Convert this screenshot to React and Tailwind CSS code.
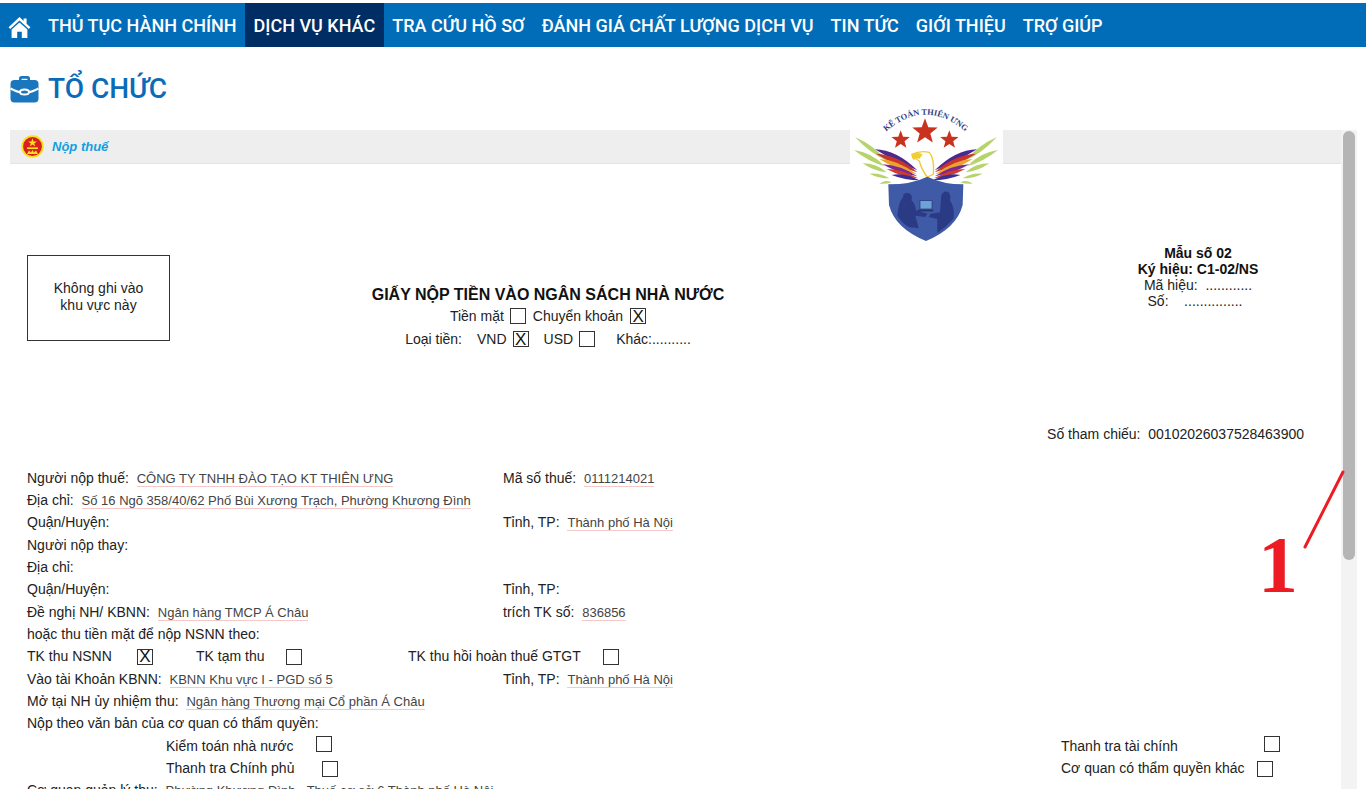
const navItems = ['THỦ TỤC HÀNH CHÍNH', 'DỊCH VỤ KHÁC', 'TRA CỨU HỒ SƠ', 'ĐÁNH GIÁ CHẤT LƯỢNG DỊCH VỤ', 'TIN TỨC', 'GIỚI THIỆU', 'TRỢ GIÚP'];

const HomeIcon = () => (
  <svg width="23" height="23" viewBox="0 0 23 23" fill="#fff">
    <path d="M11.5 1 L0.6 11.2 L2.2 13 L11.5 4.4 L20.8 13 L22.4 11.2 L18.6 7.7 V2.6 H15.6 V4.9 Z" />
    <path d="M11.5 6.4 L3.6 13.6 V22 H9.2 V15.8 H13.8 V22 H19.4 V13.6 Z" />
  </svg>
);

const CaseIcon = () => (
  <svg width="29" height="28" viewBox="0 0 29 28">
    <path d="M9 6 V3.5 Q9 1 11.5 1 H17.5 Q20 1 20 3.5 V6 H17.4 V3.8 H11.6 V6 Z" fill="#1a76bd" />
    <rect x="0.5" y="5" width="28" height="22.5" rx="4" fill="#1a76bd" />
    <path d="M0.5 13.5 Q7 17 10.5 17 M28.5 13.5 Q22 17 18.5 17" stroke="#fff" strokeWidth="2" fill="none" />
    <ellipse cx="14.5" cy="17" rx="4.5" ry="2.6" fill="none" stroke="#fff" strokeWidth="2" />
  </svg>
);

const Emblem = () => (
  <svg width="23" height="23" viewBox="0 0 23 23">
    <circle cx="11.5" cy="11.5" r="11.2" fill="#f6e020" />
    <circle cx="11.5" cy="11.5" r="9.4" fill="#d7201f" />
    <path d="M11.5 3.2 L12.6 6.4 L15.9 6.4 L13.2 8.4 L14.2 11.5 L11.5 9.6 L8.8 11.5 L9.8 8.4 L7.1 6.4 L10.4 6.4 Z" fill="#f6e020" />
    <rect x="6" y="12.4" width="11" height="1.6" fill="#f6e020" />
    <path d="M6 19 L8 15.4 L10 17.4 L11.5 15 L13 17.4 L15 15.4 L17 19 Z" fill="#f6e020" />
  </svg>
);

const star = (cx, cy, r) => {
  const pts = [];
  for (let i = 0; i < 10; i++) {
    const rad = i % 2 === 0 ? r : r * 0.42;
    const a = -Math.PI / 2 + (i * Math.PI) / 5;
    pts.push(`${cx + rad * Math.cos(a)},${cy + rad * Math.sin(a)}`);
  }
  return pts.join(' ');
};

const greenFeathers = [
  'M45 126 Q100 150 142 198 Q90 175 45 126',
  'M42 165 Q95 172 135 214 Q85 200 42 165',
  'M68 205 Q110 205 140 232 Q100 228 68 205',
  'M88 236 Q120 232 148 250 Q115 250 88 236',
  'M118 266 Q135 252 155 262 Q138 268 118 266',
];
const colorFeathers = [
  ['M105 163 Q170 165 232 226 Q165 200 105 163', '#4b2a8f'],
  ['M108 176 Q175 180 232 232 Q165 212 108 176', '#c8342c'],
  ['M118 192 Q175 195 230 238 Q170 225 118 192', '#eea22e'],
  ['M128 208 Q180 210 232 244 Q175 236 128 208', '#7a2a92'],
  ['M140 222 Q185 222 234 250 Q185 246 140 222', '#d23a2a'],
  ['M155 240 Q195 232 238 256 Q195 256 155 240', '#3c2e96'],
];

const Logo = () => (
  <svg width="153" height="150" viewBox="30 15 459 450">
    <defs>
      <path id="logoArc" d="M140 108 Q255 10 374 108" fill="none" />
    </defs>
    <text fontFamily="Liberation Serif, serif" fontWeight="700" fontSize="25" fill="#2f3d86">
      <textPath href="#logoArc" startOffset="50%" textAnchor="middle">KẾ TOÁN THIÊN ƯNG</textPath>
    </text>
    <polygon points={star(255, 110, 40)} fill="#c8321f" />
    <polygon points={star(182, 135, 29)} fill="#c8321f" />
    <polygon points={star(328, 135, 29)} fill="#c8321f" />
    {[0, 1].map((side) => (
      <g key={side} transform={side ? 'translate(516 0) scale(-1 1)' : undefined}>
        {greenFeathers.map((d) => <path key={d} d={d} fill="#b7d36b" />)}
        {colorFeathers.map(([d, c]) => <path key={d} d={d} fill={c} />)}
      </g>
    ))}
    <path d="M216 178 Q240 166 268 172 Q284 190 280 238 L262 246 Q245 225 238 198 Q225 192 216 178 Z" fill="#fff" stroke="#f0c93a" strokeWidth="4" />
    <path d="M214 178 Q232 170 248 178 L238 192 Q224 186 222 196 Q214 190 214 178 Z" fill="#f3cc2f" />
    <path d="M145 268 Q215 268 262 245 Q310 268 370 268 L368 330 Q350 400 258 438 Q165 400 147 330 Z" fill="#3f5aa6" />
    <path d="M172 362 Q176 318 190 306 Q186 294 204 294 Q220 298 214 316 Q226 326 228 346 L262 356 L256 366 L226 362 L236 400 L206 396 Q186 384 172 362 Z" fill="#2a3a84" />
    <path d="M304 300 Q312 284 326 292 Q334 304 330 316 Q346 340 340 372 Q318 396 292 414 L292 372 L266 366 L272 356 L300 352 Z" fill="#2a3a84" />
    <rect x="240" y="317" width="36" height="25" fill="#6ea1d8" stroke="#26336f" strokeWidth="2" />
    <rect x="234" y="344" width="46" height="5" fill="#26336f" />
  </svg>
);

const Check = ({ checked, className = '' }) => (
  <span className={`inline-flex w-4 h-4 shrink-0 items-center justify-center border border-[#333] text-[17px] leading-none text-[#111] ${className}`}>
    {checked ? 'X' : ''}
  </span>
);

const Val = ({ children }) => (
  <span className="text-[13px] text-[#444] border-b border-[#f6c9c9] ml-1">{children}</span>
);

const Row = ({ children, right }) => (
  <div className="grid grid-cols-[476px_1fr] h-[22.35px] items-center whitespace-nowrap">
    <div>{children}</div>
    {right && <div>{right}</div>}
  </div>
);

export default function App() {
  return (
    <div className="relative h-[789px] overflow-hidden bg-white font-['Liberation_Sans',sans-serif] text-[14px] text-[#222]">
      <nav className="mt-[3px] flex h-[44px] items-stretch bg-[#016db8] font-['Roboto',sans-serif] text-[18px] font-medium text-white">
        <div className="flex w-[39.5px] items-center justify-center pl-[-2px] pt-[4px]">
          <HomeIcon />
        </div>
        {navItems.map((item, i) => (
          <div key={item} className={`flex items-center whitespace-nowrap px-[8.5px] ${i === 1 ? 'bg-[#002d64]' : ''}`}>
            {item}
          </div>
        ))}
      </nav>

      <div className="flex h-[83px] items-center gap-[9px] pl-[10px]">
        <CaseIcon />
        <h1 className="font-['Roboto',sans-serif] text-[28px] font-medium text-[#0a6cb8]">TỔ CHỨC</h1>
      </div>

      <div className="flex h-[659px] pl-[10px]">
        <div className="w-[1331px]">
          <div className="flex h-[34px] items-center gap-2 border-b border-[#e4e4e4] bg-[#eeeeee] pl-[11px]">
            <Emblem />
            <span className="text-[13px] font-bold italic text-[#12a0e0]">Nộp thuế</span>
          </div>

          <div className="flex pt-[91px] pl-[17px]">
            <div className="flex h-[86px] w-[143px] shrink-0 items-center justify-center border border-[#333] pb-[2px] text-center leading-[17px]">
              Không ghi vào<br />khu vực này
            </div>
            <div className="w-[756px] pt-[31px] text-center whitespace-nowrap">
              <div className="text-[16px] leading-[18px] font-bold text-[#111]">GIẤY NỘP TIỀN VÀO NGÂN SÁCH NHÀ NƯỚC</div>
              <div className="mt-[1px] flex h-[22px] items-center justify-center gap-[6px]">
                Tiền mặt <Check /> <span className="ml-[1px]">Chuyển khoản</span> <Check checked className="ml-[1px]" />
              </div>
              <div className="flex h-[24px] items-center justify-center">
                <span>Loại tiền:</span><span className="ml-[15px]">VND</span><Check checked className="ml-[6px]" />
                <span className="ml-[15px]">USD</span><Check className="ml-[6px]" />
                <span className="ml-[21px]">Khác:..........</span>
              </div>
            </div>
            <div className="ml-[172px] w-[200px] -mt-[10px] pt-[0px] text-center leading-[16px]">
              <div className="font-bold text-[#111]">Mẫu số 02</div>
              <div className="font-bold text-[#111]">Ký hiệu: C1-02/NS</div>
              <div className="whitespace-pre">Mã hiệu:  ............</div>
              <div className="whitespace-pre mr-[6px]">Số:    ...............</div>
            </div>
          </div>

          <div className="mt-[73px] pr-[37px] text-right">Số tham chiếu:&nbsp; 00102026037528463900</div>

          <div className="mt-[22px] pl-[17px]">
            <Row right={<>Mã số thuế: <Val>0111214021</Val></>}>Người nộp thuế: <Val>CÔNG TY TNHH ĐÀO TẠO KT THIÊN ƯNG</Val></Row>
            <Row>Địa chỉ: <Val>Số 16 Ngõ 358/40/62 Phố Bùi Xương Trạch, Phường Khương Đình</Val></Row>
            <Row right={<>Tỉnh, TP: <Val>Thành phố Hà Nội</Val></>}>Quận/Huyện:</Row>
            <Row>Người nộp thay:</Row>
            <Row>Địa chỉ:</Row>
            <Row right="Tỉnh, TP:">Quận/Huyện:</Row>
            <Row right={<>trích TK số: <Val>836856</Val></>}>Đề nghị NH/ KBNN: <Val>Ngân hàng TMCP Á Châu</Val></Row>
            <Row>hoặc thu tiền mặt để nộp NSNN theo:</Row>
            <div className="flex h-[22.35px] items-center whitespace-nowrap">
              <span className="w-[110px]">TK thu NSNN</span><Check checked />
              <span className="ml-[43px] w-[90px]">TK tạm thu</span><Check />
              <span className="ml-[106px] w-[195px]">TK thu hồi hoàn thuế GTGT</span><Check />
            </div>
            <Row right={<>Tỉnh, TP: <Val>Thành phố Hà Nội</Val></>}>Vào tài Khoản KBNN: <Val>KBNN Khu vực I - PGD số 5</Val></Row>
            <Row>Mở tại NH ủy nhiệm thu: <Val>Ngân hàng Thương mại Cổ phần Á Châu</Val></Row>
            <Row>Nộp theo văn bản của cơ quan có thẩm quyền:</Row>
            <div className="flex h-[22.35px] items-center whitespace-nowrap">
              <span className="ml-[139px] w-[150px]">Kiểm toán nhà nước</span><Check className="-mt-[4px]" />
              <span className="ml-[729px] w-[203px]">Thanh tra tài chính</span><Check className="-mt-[4px]" />
            </div>
            <div className="flex h-[22.35px] items-center whitespace-nowrap">
              <span className="ml-[139px] w-[156px]">Thanh tra Chính phủ</span><Check />
              <span className="ml-[723px] w-[196px]">Cơ quan có thẩm quyền khác</span><Check />
            </div>
            <Row>Cơ quan quản lý thu: <Val>Phường Khương Đình - Thuế cơ sở 6 Thành phố Hà Nội</Val></Row>
          </div>
        </div>

        <div className="flex w-[16px] justify-center bg-[#f3f3f3] pt-[1px]">
          <div className="h-[429px] w-[12px] rounded-full bg-[#b5b5b5]" />
        </div>
      </div>

      {/* logo sits over the grey bar */}
      <div className="absolute left-[850px] top-[100px] bg-white">
        <Logo />
      </div>

      {/* red note drawn on the screenshot */}
      <svg className="absolute left-[1300px] top-[468px]" width="48" height="84" viewBox="0 0 48 84">
        <line x1="43" y1="4" x2="5" y2="79" stroke="#ed1c24" strokeWidth="3" strokeLinecap="round" />
      </svg>
      <div className="absolute left-[1258px] top-[525px] font-['Liberation_Serif',serif] text-[80px] leading-[80px] font-bold text-[#ed1c24]">1</div>
    </div>
  );
}
